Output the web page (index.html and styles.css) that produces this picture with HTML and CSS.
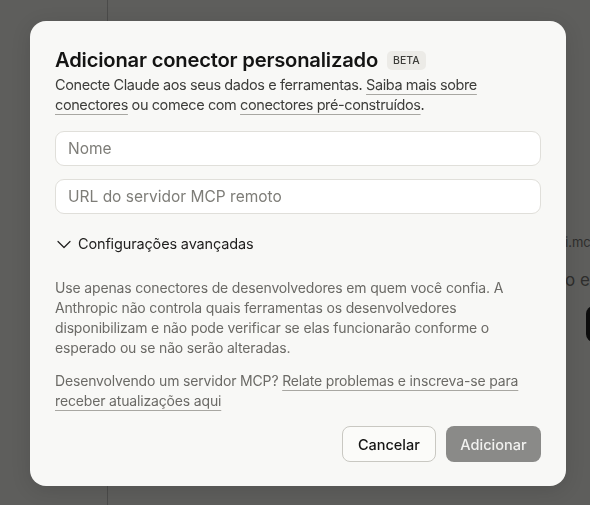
FILE: index.html
```html
<!DOCTYPE html>
<html lang="pt-BR">
<head>
    <meta charset="UTF-8">
    <meta name="viewport" content="width=device-width, initial-scale=1.0">
    <title>Adicionar conector personalizado</title>
    <link rel="stylesheet" href="styles.css">
</head>
<body>
    <div class="app">
        <aside class="sidebar"></aside>
        <main class="main">
            <div class="behind">
                <p class="behind-url">i.mcp.exemplo.com</p>
                <p class="behind-text">o exemplo</p>
                <button class="behind-btn">Conectar</button>
            </div>
        </main>
    </div>

    <div class="overlay">
        <div class="modal">
            <div class="modal-head">
                <h2 class="title">Adicionar conector personalizado</h2>
                <span class="badge">BETA</span>
            </div>
            <p class="intro">
                Conecte Claude aos seus dados e ferramentas. <a href="#">Saiba mais sobre conectores</a> ou comece com <a href="#">conectores pré-construídos</a>.
            </p>

            <div class="fields">
                <input class="field" type="text" placeholder="Nome">
                <input class="field" type="text" placeholder="URL do servidor MCP remoto">
            </div>

            <button class="advanced">
                <svg class="chevron" width="16" height="16" viewBox="0 0 16 16" fill="none">
                    <path d="M2 5.5L8 11.5L14 5.5" stroke="#1f1e1d" stroke-width="1.2" stroke-linecap="round" stroke-linejoin="round"/>
                </svg>
                Configurações avançadas
            </button>

            <p class="note">
                Use apenas conectores de desenvolvedores em quem você confia. A Anthropic não controla quais ferramentas os desenvolvedores disponibilizam e não pode verificar se elas funcionarão conforme o esperado ou se não serão alteradas.
            </p>
            <p class="note">
                Desenvolvendo um servidor MCP? <a href="#">Relate problemas e inscreva-se para receber atualizações aqui</a>
            </p>

            <div class="actions">
                <button class="btn btn-cancel">Cancelar</button>
                <button class="btn btn-add">Adicionar</button>
            </div>
        </div>
    </div>
</body>
</html>
```

FILE: styles.css
```css
body {
    margin: 0;
    width: 590px;
    height: 505px;
    overflow: hidden;
    font-family: 'Inter', 'Noto Sans', sans-serif;
    background-color: #5e5e5c;
}
.app {
    display: flex;
    height: 505px;
}
.sidebar {
    width: 107px;
    flex-shrink: 0;
    border-right: 1px solid #4b4b4a;
}
.main {
    flex: 1;
    overflow: hidden;
}
.behind {
    padding: 234px 0 0 457px;
    white-space: nowrap;
}
.behind-url {
    margin: 0;
    font-size: 13px;
    color: #2e2e2d;
}
.behind-text {
    margin: 20px 0 0;
    font-size: 17px;
    color: #2e2e2d;
}
.behind-btn {
    margin: 16px 0 0 21px;
    padding: 10px 20px;
    font-size: 14px;
    border: none;
    border-radius: 8px;
    background-color: #0d0d0d;
    color: #5e5e5c;
}

.overlay {
    position: fixed;
    inset: 0;
    padding: 21px 0 0 30px;
}
.modal {
    width: 536px;
    box-sizing: border-box;
    padding: 24px 25px 24px;
    background-color: #f8f8f6;
    border-radius: 16px;
    box-shadow: 0 4px 20px rgba(0, 0, 0, 0.12);
}
.modal-head {
    display: flex;
    align-items: center;
    gap: 9px;
}
.title {
    margin: 0;
    font-size: 20.2px;
    font-weight: 600;
    line-height: 30px;
    color: #141413;
    letter-spacing: -0.2px;
}
.badge {
    padding: 3px 6px;
    font-size: 10.5px;
    font-weight: 500;
    color: #3d3d3a;
    background-color: #ecebe7;
    border-radius: 5px;
}
.intro {
    margin: 0;
    font-size: 14.5px;
    line-height: 20px;
    letter-spacing: -0.4px;
    color: #3d3d3a;
}
a {
    color: inherit;
    text-decoration: underline;
    text-decoration-color: #a8a7a2;
    text-underline-offset: 4px;
}
.fields {
    display: flex;
    flex-direction: column;
    gap: 13px;
    margin-top: 16px;
}
.field {
    height: 35px;
    box-sizing: border-box;
    padding: 0 12px;
    font-family: inherit;
    font-size: 15.5px;
    border: 1px solid #e0dfda;
    border-radius: 9px;
    background-color: #ffffff;
}
.field::placeholder {
    color: #7e7d78;
}
.advanced {
    display: flex;
    align-items: center;
    gap: 6px;
    margin: 21px 0 0;
    padding: 0;
    border: none;
    background: none;
    font-family: inherit;
    font-size: 14.5px;
    letter-spacing: -0.15px;
    color: #1f1e1d;
    cursor: pointer;
}
.chevron {
    margin-left: 1px;
}
.note {
    margin: 26px 0 0;
    font-size: 14px;
    line-height: 20px;
    letter-spacing: -0.16px;
    color: #6b6a66;
}
.note + .note {
    margin-top: 13px;
}
.actions {
    display: flex;
    justify-content: flex-end;
    gap: 10px;
    margin-top: 15px;
}
.btn {
    height: 36px;
    padding: 0 15px;
    font-family: inherit;
    font-size: 14.5px;
    font-weight: 500;
    border-radius: 8px;
    cursor: pointer;
}
.btn-cancel {
    background-color: #fbfbf9;
    border: 1px solid #c9c8c2;
    color: #141413;
}
.btn-add {
    padding: 0 14.5px;
    background-color: #8a8a88;
    border: none;
    color: #f2f2f0;
}
```
